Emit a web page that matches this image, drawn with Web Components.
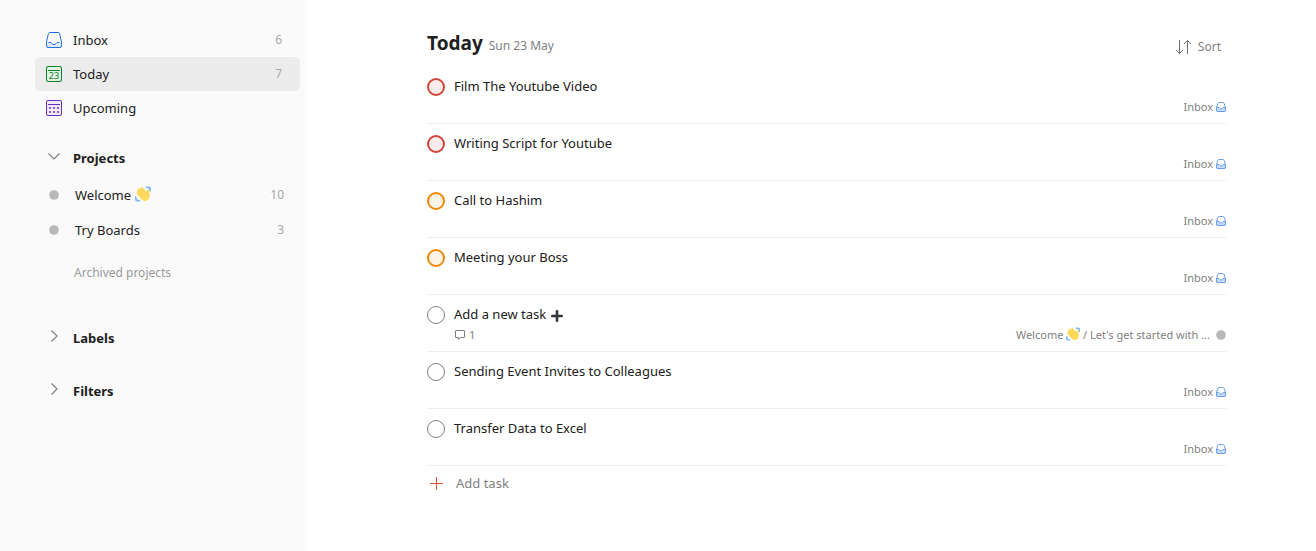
<!DOCTYPE html>
<html lang="en">
<head>
<meta charset="UTF-8">
<meta name="viewport" content="width=device-width, initial-scale=1">
<title>Today</title>
<style>
    body {
        margin: 0;
        font-family: "Noto Sans", "Open Sans", sans-serif;
        font-size: 13px;
        line-height: 20px;
        color: #202020;
        background-color: #fff;
    }
</style>
</head>
<body>
<todo-app>
    <side-bar slot="sidebar">
        <nav-item icon="inbox" count="6">Inbox</nav-item>
        <nav-item icon="today" count="7" active>Today</nav-item>
        <nav-item icon="upcoming">Upcoming</nav-item>
        <side-section slot="sections" titulo="Projects" open>
            <project-item count="10">Welcome <app-icon name="wave" size="16"></app-icon></project-item>
            <project-item count="3">Try Boards</project-item>
            <a slot="footer" href="#archived">Archived projects</a>
        </side-section>
        <side-section slot="sections" titulo="Labels"></side-section>
        <side-section slot="sections" titulo="Filters"></side-section>
    </side-bar>
    <task-list titulo="Today" date="Sun 23 May">
        <task-item priority="1">Film The Youtube Video</task-item>
        <task-item priority="1">Writing Script for Youtube</task-item>
        <task-item priority="2">Call to Hashim</task-item>
        <task-item priority="2">Meeting your Boss</task-item>
        <task-item comments="1">Add a new task <app-icon name="heavy-plus" size="14"></app-icon>
            <span slot="project">Welcome <app-icon name="wave" size="14"></app-icon> / Let's get started with ...</span>
            <app-icon slot="project-icon" name="dot" size="10"></app-icon>
        </task-item>
        <task-item>Sending Event Invites to Colleagues</task-item>
        <task-item>Transfer Data to Excel</task-item>
    </task-list>
</todo-app>

<script>
const ICONS = {
    'inbox': `
        <svg viewBox="0 0 16 16" fill="none" stroke="#246fe0">
            <path d="M.5 10.5h4.2c.6 0 .8 1.9 3.3 1.9s2.7-1.9 3.3-1.9h4.200V14a1.500 1.500 0 0 1-1.500 1.500H2A1.500 1.500 0 0 1 .5 14z" fill="#dfeafa" stroke="none"/>
            <path d="M3.800.5h8.400a1.500 1.500 0 0 1 1.400 1.100l1.900 8.400v4a1.500 1.500 0 0 1-1.500 1.500H2A1.500 1.500 0 0 1 .5 14v-4l1.900-8.400A1.500 1.500 0 0 1 3.800.5z"/>
            <path d="M2.500 10.500h2.300c.5 0 .8 2 3.200 2s2.700-2 3.200-2h2.300"/>
        </svg>`,
    'today': `
        <svg viewBox="0 0 16 16" fill="none" stroke="#058527">
            <rect x=".5" y=".5" width="15" height="15" rx="1.500" fill="#e2f0e5"/>
            <path d="M2 4.500h12"/>
            <text x="8" y="13" text-anchor="middle" font-size="9" fill="#058527" stroke="none">23</text>
        </svg>`,
    'upcoming': `
        <svg viewBox="0 0 16 16" fill="none" stroke="#692fc2">
            <rect x=".5" y=".5" width="15" height="15" rx="1.500" fill="#f0e9fa"/>
            <path d="M2 4.500h12"/>
            <path d="M3 8h2M7 8h2M11 8h2M3 12h2M7 12h2M11 12h2" stroke-width="1.600"/>
        </svg>`,
    'inbox-small': `
        <svg viewBox="0 0 10 10" fill="none" stroke="#6a9cec">
            <path d="M3.200.5h3.600a1.500 1.500 0 0 1 1.400 1L9.500 5.500V8A1.500 1.500 0 0 1 8 9.500H2A1.500 1.500 0 0 1 .5 8V5.500l1.300-4a1.500 1.500 0 0 1 1.400-1z"/>
            <path d="M.5 5.500h2.300C3.200 5.500 3.500 7 5 7s1.800-1.500 2.200-1.500h2.300V8A1.500 1.500 0 0 1 8 9.500H2A1.500 1.500 0 0 1 .5 8z" fill="#c8dbf8"/>
        </svg>`,
    'chevron': `
        <svg viewBox="0 0 14 14" fill="none" stroke="#808080" stroke-width="1.200">
            <path d="M1.500 4.500L7 10l5.500-5.500"/>
        </svg>`,
    'dot': `
        <svg viewBox="0 0 10 10"><circle cx="5" cy="5" r="4.800" fill="#b8b8b8"/></svg>`,
    'sort': `
        <svg viewBox="0 0 18 16" fill="none" stroke="#707070">
            <path d="M4.500 1v13.500M1 11l3.500 3.500L8 11M12.500 15V1.500M9 5l3.500-3.500L16 5"/>
        </svg>`,
    'plus': `
        <svg viewBox="0 0 15 15" fill="none" stroke="#dd4b39">
            <path d="M7.500 1v13M1 7.500h13"/>
        </svg>`,
    'heavy-plus': `
        <svg viewBox="0 0 14 14" fill="none" stroke="#31373d" stroke-width="2.600" stroke-linecap="round">
            <path d="M7 2.300v9.400M2.300 7h9.400"/>
        </svg>`,
    'comment': `
        <svg viewBox="0 0 12 12" fill="none" stroke="#808080">
            <path d="M2 1.500h8a.5.5 0 0 1 .5.5v6a.5.5 0 0 1-.5.5H6.500L4.500 10.500v-2H2a.5.5 0 0 1-.5-.5V2a.5.5 0 0 1 .5-.5z"/>
        </svg>`,
    'wave': `
        <svg viewBox="0 0 36 36">
            <path d="M24 1h7a5 5 0 0 1 5 5v7c-3 0-4-2-4-4 0-3-2-4-4-4-3 0-4-2-4-4zM0 23c3 0 4 2 4 4 0 3 2 4 4 4 3 0 4 2 4 4H5a5 5 0 0 1-5-5z" fill="#7cbcf0"/>
            <path d="M5 9c1.500-1.500 3-1 4 0L7.500 7C6.500 5 9 2.500 11.500 5l3 3-1-2c-1-3 2-4.500 4-2.500l9 10c-.5-3 1-6 3.500-6 2 0 2 2 2 4l1 9c1 8-4 13-10 13-5 0-8-2-11-6L4 18c-2-3 1-5 3-4l-2-1c-1-1-1-3 0-4z" fill="#ffdc5d"/>
            <path d="M9 9l9 10M14 7l9 10M7 14l8 9M26.500 13.500c-2 3-1 5 1 7" fill="none" stroke="#f5b84f" stroke-width="1.200" stroke-linecap="round"/>
        </svg>`
};

class BaseElement extends HTMLElement {
    constructor () {
        super();
        this.attachShadow({ mode: 'open' });
    }
    connectedCallback() {
        this.shadowRoot.innerHTML = `<style>${BaseElement.resetStyles}${this.styles()}</style>${this.markup()}`;
    }
    attr(name) {
        return this.getAttribute(name) || '';
    }
}

BaseElement.resetStyles = /* css */ `
    *,
    *::before,
    *::after {
        box-sizing: border-box;
        padding: 0;
        margin: 0;
    }
    :host {
        display: block;
    }
    a {
        color: inherit;
        text-decoration: none;
    }
    button {
        border: none;
        background: none;
        font: inherit;
        color: inherit;
        cursor: pointer;
    }
`;

class AppIcon extends BaseElement {
    styles() {
        const size = this.attr('size') || '16';
        return /* css */ `
            :host {
                display: inline-block;
                flex: none;
                inline-size: ${this.attr('width') || size}px;
                block-size: ${size}px;
                vertical-align: text-bottom;
            }
            :host([name="wave"]) {
                vertical-align: -2px;
            }
            svg {
                display: block;
                inline-size: 100%;
                block-size: 100%;
            }
        `;
    }
    markup() {
        return ICONS[this.attr('name')];
    }
}

class TodoApp extends BaseElement {
    styles() {
        return /* css */ `
            :host {
                display: grid;
                grid-template-columns: 305px 1fr;
                min-block-size: 100vh;
            }
            aside {
                background-color: #fafafa;
            }
            main {
                padding: 31px 0 32px 33px;
            }
        `;
    }
    markup() {
        return /* html */ `
            <aside><slot name="sidebar"></slot></aside>
            <main><slot></slot></main>
        `;
    }
}

class SideBar extends BaseElement {
    styles() {
        return /* css */ `
            :host {
                padding: 23px 5px 24px 35px;
            }
            .sections {
                display: flex;
                flex-direction: column;
                gap: 19px;
                padding-block-start: 16px;
            }
        `;
    }
    markup() {
        return /* html */ `
            <nav><slot></slot></nav>
            <div class="sections"><slot name="sections"></slot></div>
        `;
    }
}

class NavItem extends BaseElement {
    styles() {
        return /* css */ `
            a {
                display: flex;
                align-items: center;
                gap: 11px;
                min-block-size: 34px;
                padding: 0 18px 0 11px;
                border-radius: 5px;
            }
            :host([active]) a {
                background-color: #ececec;
            }
            .label {
                flex: 1;
            }
            .count {
                font-size: 12px;
                color: #a8a8a8;
            }
        `;
    }
    markup() {
        return /* html */ `
            <a href="#${this.attr('icon')}">
                <app-icon name="${this.attr('icon')}"></app-icon>
                <span class="label"><slot></slot></span>
                <span class="count">${this.attr('count')}</span>
            </a>
        `;
    }
}

class SideSection extends BaseElement {
    styles() {
        return /* css */ `
            button {
                display: flex;
                align-items: center;
                gap: 12px;
                inline-size: 100%;
                min-block-size: 34px;
                padding-inline-start: 12px;
                font-weight: 700;
                text-align: start;
            }
            button app-icon {
                margin-block-end: 4px;
                transform: rotate(-90deg);
            }
            :host([open]) button app-icon {
                transform: none;
            }
            .content {
                padding-block: 2px 19px;
            }
            .footer {
                padding: 16px 0 0 39px;
                font-size: 12px;
                color: #999;
            }
        `;
    }
    markup() {
        const open = this.hasAttribute('open');
        return /* html */ `
            <button type="button" aria-expanded="${open}">
                <app-icon name="chevron" size="14"></app-icon>${this.attr('titulo')}
            </button>
            ${open ? '<div class="content"><slot></slot><div class="footer"><slot name="footer"></slot></div></div>' : ''}
        `;
    }
    connectedCallback() {
        super.connectedCallback();
        // Footer links are passed in from the page, so give them the muted look here
        this.querySelectorAll('a[slot]').forEach((a) => {
            a.style.color = 'inherit';
            a.style.textDecoration = 'none';
        });
    }
}

class ProjectItem extends BaseElement {
    styles() {
        return /* css */ `
            a {
                display: flex;
                align-items: center;
                gap: 16px;
                min-block-size: 35px;
                padding: 0 16px 0 14px;
            }
            .label {
                flex: 1;
            }
            .count {
                font-size: 12px;
                color: #a8a8a8;
            }
        `;
    }
    markup() {
        return /* html */ `
            <a href="#project">
                <app-icon name="dot" size="10"></app-icon>
                <span class="label"><slot></slot></span>
                <span class="count">${this.attr('count')}</span>
            </a>
        `;
    }
}

class TaskList extends BaseElement {
    styles() {
        return /* css */ `
            :host {
                max-inline-size: 800px;
                margin-inline: auto;
            }
            header {
                display: flex;
                align-items: center;
                justify-content: space-between;
                padding-block-end: 9px;
            }
            .heading {
                display: flex;
                align-items: baseline;
                gap: 6px;
                line-height: 24px;
            }
            h1 {
                font-size: 19px;
                font-weight: 700;
            }
            .date {
                font-size: 12px;
                color: #808080;
            }
            .sort {
                display: flex;
                align-items: center;
                gap: 5px;
                padding: 4px 6px 0 0;
                font-size: 12px;
                color: #808080;
            }
            .add {
                display: flex;
                align-items: center;
                gap: 12px;
                min-block-size: 34px;
                padding-inline-start: 2px;
                color: #808080;
            }
        `;
    }
    markup() {
        return /* html */ `
            <header>
                <div class="heading">
                    <h1>${this.attr('titulo')}</h1>
                    <span class="date">${this.attr('date')}</span>
                </div>
                <button type="button" class="sort"><app-icon name="sort" width="18" size="16"></app-icon>Sort</button>
            </header>
            <slot></slot>
            <button type="button" class="add"><app-icon name="plus" size="15"></app-icon>Add task</button>
        `;
    }
}

class TaskItem extends BaseElement {
    styles() {
        return /* css */ `
            :host {
                --color: #808080;
                --fill: #fff;
                --border: 1px;
                border-block-end: 1px solid #eee;
                padding-block: 9px 5px;
            }
            :host([priority="1"]) {
                --color: #d1453b;
                --fill: #faecec;
                --border: 2px;
            }
            :host([priority="2"]) {
                --color: #eb8909;
                --fill: #fdf3e6;
                --border: 2px;
            }
            .row {
                display: flex;
                align-items: center;
                gap: 9px;
            }
            input {
                appearance: none;
                flex: none;
                inline-size: 18px;
                block-size: 18px;
                margin-block-start: 2px;
                border: var(--border) solid var(--color);
                border-radius: 50%;
                background-color: var(--fill);
                cursor: pointer;
            }
            .meta {
                display: flex;
                align-items: center;
                justify-content: space-between;
                min-block-size: 22px;
                padding: 0 1px 0 27px;
                font-size: 11px;
                color: #808080;
            }
            .comments,
            .project {
                display: flex;
                align-items: center;
                gap: 3px;
            }
            .project {
                margin-inline-start: auto;
            }
            :host([comments]) .project {
                gap: 6px;
            }
        `;
    }
    markup() {
        const comments = this.attr('comments');
        return /* html */ `
            <div class="row">
                <input type="checkbox" id="done">
                <label for="done"><slot></slot></label>
            </div>
            <div class="meta">
                ${comments ? `<a class="comments" href="#comments"><app-icon name="comment" size="12"></app-icon>${comments}</a>` : ''}
                <a class="project" href="#inbox">
                    <slot name="project">Inbox</slot>
                    <slot name="project-icon"><app-icon name="inbox-small" size="10"></app-icon></slot>
                </a>
            </div>
        `;
    }
}

customElements.define('app-icon', AppIcon);
customElements.define('nav-item', NavItem);
customElements.define('project-item', ProjectItem);
customElements.define('side-section', SideSection);
customElements.define('side-bar', SideBar);
customElements.define('task-item', TaskItem);
customElements.define('task-list', TaskList);
customElements.define('todo-app', TodoApp);
</script>
</body>
</html>
